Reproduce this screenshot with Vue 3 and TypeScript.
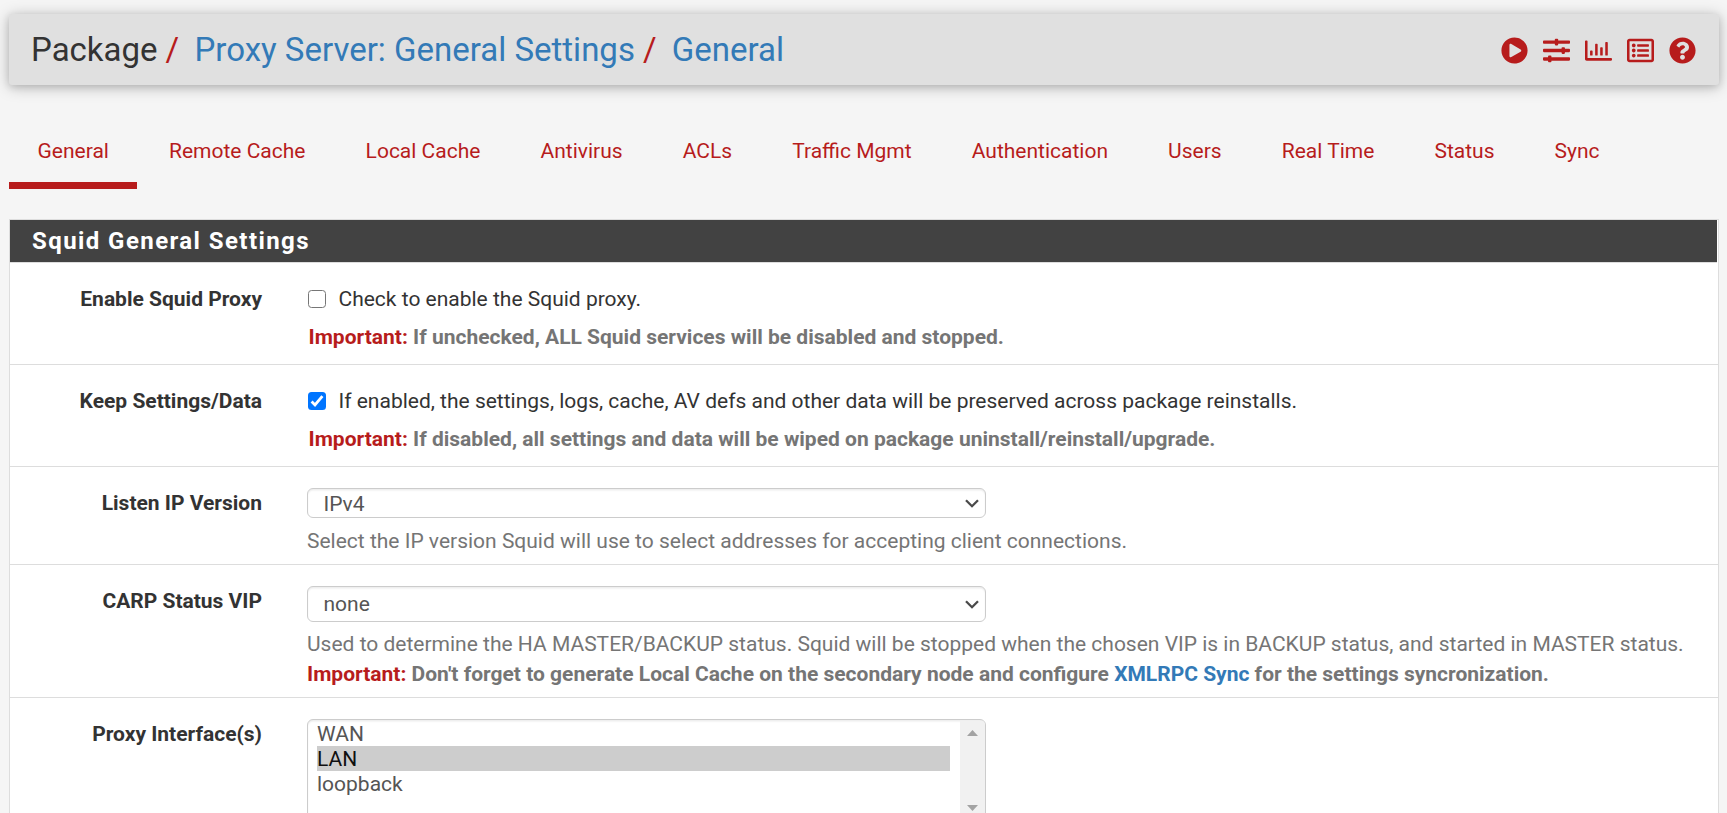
<script setup lang="ts">
interface Icon {
  name: string
  path: string
}

interface Crumb {
  text: string
  link: boolean
}

const crumbs: Crumb[] = [
  { text: 'Package', link: false },
  { text: 'Proxy Server: General Settings', link: true },
  { text: 'General', link: true },
]

const icons: Icon[] = [
  {
    name: 'Start service',
    path: 'M256 8C119 8 8 119 8 256s111 248 248 248 248-111 248-248S393 8 256 8zm115.7 272l-176 101c-15.8 8.8-35.7-2.5-35.7-21V152c0-18.4 19.8-29.8 35.7-21l176 107c16.4 9.2 16.4 32.9 0 42z',
  },
  {
    name: 'Related settings',
    path: 'M496 384H160v-16c0-8.8-7.2-16-16-16h-32c-8.8 0-16 7.2-16 16v16H16c-8.8 0-16 7.2-16 16v32c0 8.8 7.2 16 16 16h80v16c0 8.8 7.2 16 16 16h32c8.8 0 16-7.2 16-16v-16h336c8.8 0 16-7.2 16-16v-32c0-8.8-7.2-16-16-16zm0-160h-80v-16c0-8.8-7.2-16-16-16h-32c-8.8 0-16 7.2-16 16v16H16c-8.8 0-16 7.2-16 16v32c0 8.8 7.2 16 16 16h336v16c0 8.8 7.2 16 16 16h32c8.8 0 16-7.2 16-16v-16h80c8.8 0 16-7.2 16-16v-32c0-8.8-7.2-16-16-16zm0-160H288V48c0-8.8-7.2-16-16-16h-32c-8.8 0-16 7.2-16 16v16H16C7.2 64 0 71.2 0 80v32c0 8.8 7.2 16 16 16h208v16c0 8.8 7.2 16 16 16h32c8.8 0 16-7.2 16-16v-16h208c8.8 0 16-7.2 16-16V80c0-8.8-7.2-16-16-16z',
  },
  {
    name: 'Status',
    path: 'M396.8 352h22.4c6.4 0 12.8-6.4 12.8-12.8V108.8c0-6.4-6.4-12.8-12.8-12.8h-22.4c-6.4 0-12.8 6.4-12.8 12.8v230.4c0 6.4 6.4 12.8 12.8 12.8zm-192 0h22.4c6.4 0 12.8-6.4 12.8-12.8V140.8c0-6.4-6.4-12.8-12.8-12.8h-22.4c-6.4 0-12.8 6.4-12.8 12.8v198.4c0 6.4 6.4 12.8 12.8 12.8zm96 0h22.4c6.4 0 12.8-6.4 12.8-12.8V204.8c0-6.4-6.4-12.8-12.8-12.8h-22.4c-6.4 0-12.8 6.4-12.8 12.8v134.4c0 6.4 6.4 12.8 12.8 12.8zM496 400H48V80c0-8.84-7.16-16-16-16H16C7.16 64 0 71.16 0 80v336c0 17.67 14.33 32 32 32h464c8.84 0 16-7.16 16-16v-16c0-8.84-7.16-16-16-16zm-387.2-48h22.4c6.4 0 12.8-6.4 12.8-12.8v-70.4c0-6.4-6.4-12.8-12.8-12.8h-22.4c-6.4 0-12.8 6.4-12.8 12.8v70.4c0 6.4 6.4 12.8 12.8 12.8z',
  },
  {
    name: 'Log entries',
    path: 'M464 32H48C21.49 32 0 53.49 0 80v352c0 26.51 21.49 48 48 48h416c26.51 0 48-21.49 48-48V80c0-26.51-21.49-48-48-48zm-6 400H54a6 6 0 0 1-6-6V86a6 6 0 0 1 6-6h404a6 6 0 0 1 6 6v340a6 6 0 0 1-6 6zm-42-92v24c0 6.627-5.373 12-12 12H204c-6.627 0-12-5.373-12-12v-24c0-6.627 5.373-12 12-12h200c6.627 0 12 5.373 12 12zm0-96v24c0 6.627-5.373 12-12 12H204c-6.627 0-12-5.373-12-12v-24c0-6.627 5.373-12 12-12h200c6.627 0 12 5.373 12 12zm0-96v24c0 6.627-5.373 12-12 12H204c-6.627 0-12-5.373-12-12v-24c0-6.627 5.373-12 12-12h200c6.627 0 12 5.373 12 12zm-252 12c0 19.882-16.118 36-36 36s-36-16.118-36-36 16.118-36 36-36 36 16.118 36 36zm0 96c0 19.882-16.118 36-36 36s-36-16.118-36-36 16.118-36 36-36 36 16.118 36 36zm0 96c0 19.882-16.118 36-36 36s-36-16.118-36-36 16.118-36 36-36 36 16.118 36 36z',
  },
  {
    name: 'Help',
    path: 'M504 256c0 136.997-111.043 248-248 248S8 392.997 8 256C8 119.083 119.043 8 256 8s248 111.083 248 248zM262.655 90c-54.497 0-89.255 22.957-116.549 63.758-3.536 5.286-2.353 12.415 2.715 16.258l34.699 26.31c5.205 3.947 12.621 3.008 16.665-2.122 17.864-22.658 30.113-35.797 57.303-35.797 20.429 0 45.698 13.148 45.698 32.958 0 14.976-12.363 22.667-32.534 33.976C247.128 238.528 216 254.941 216 296v4c0 6.627 5.373 12 12 12h56c6.627 0 12-5.373 12-12v-1.333c0-28.462 83.186-29.647 83.186-106.667 0-58.002-60.165-102-116.531-102zM256 338c-25.365 0-46 20.635-46 46 0 25.364 20.635 46 46 46s46-20.636 46-46c0-25.365-20.635-46-46-46z',
  },
]

const tabs: string[] = [
  'General', 'Remote Cache', 'Local Cache', 'Antivirus', 'ACLs', 'Traffic Mgmt',
  'Authentication', 'Users', 'Real Time', 'Status', 'Sync',
]

const interfaces: string[] = ['WAN', 'LAN', 'loopback']
</script>

<template>
  <div class="page">
    <header class="header">
      <div class="crumbs">
        <template v-for="(c, i) in crumbs" :key="c.text">
          <span v-if="i > 0" class="slash">/</span>
          <span :class="{ link: c.link }">{{ c.text }}</span>
        </template>
      </div>
      <div class="icons">
        <svg v-for="icon in icons" :key="icon.name" viewBox="0 0 512 512" :aria-label="icon.name">
          <path :d="icon.path" />
        </svg>
      </div>
    </header>

    <nav class="tabs">
      <a v-for="(t, i) in tabs" :key="t" class="tab" :class="{ active: i === 0 }">{{ t }}</a>
    </nav>

    <section class="panel">
      <h2 class="heading">Squid General Settings</h2>

      <div class="row">
        <label class="label">Enable Squid Proxy</label>
        <div class="field">
          <div class="check"><span class="box"></span>Check to enable the Squid proxy.</div>
          <p class="help strong inset"><span class="red">Important:</span> If unchecked, ALL Squid services will be disabled and stopped.</p>
        </div>
      </div>

      <div class="row">
        <label class="label">Keep Settings/Data</label>
        <div class="field">
          <div class="check">
            <span class="box checked">
              <svg viewBox="0 0 18 18"><path d="M3.6 9.6 7 13 14.4 4.2" /></svg>
            </span>If enabled, the settings, logs, cache, AV defs and other data will be preserved across package reinstalls.
          </div>
          <p class="help strong inset"><span class="red">Important:</span> If disabled, all settings and data will be wiped on package uninstall/reinstall/upgrade.</p>
        </div>
      </div>

      <div class="row short">
        <label class="label">Listen IP Version</label>
        <div class="field">
          <div class="select compact">
            <span>IPv4</span>
            <svg viewBox="0 0 14 9"><path d="M1 1.2 7 7.2 13 1.2" /></svg>
          </div>
          <p class="help">Select the IP version Squid will use to select addresses for accepting client connections.</p>
        </div>
      </div>

      <div class="row tall">
        <label class="label">CARP Status VIP</label>
        <div class="field">
          <div class="select">
            <span>none</span>
            <svg viewBox="0 0 14 9"><path d="M1 1.2 7 7.2 13 1.2" /></svg>
          </div>
          <p class="help tight">Used to determine the HA MASTER/BACKUP status. Squid will be stopped when the chosen VIP is in BACKUP status, and started in MASTER status.</p>
          <p class="help strong next"><span class="red">Important:</span> Don't forget to generate Local Cache on the secondary node and configure <a class="link">XMLRPC Sync</a> for the settings syncronization.</p>
        </div>
      </div>

      <div class="row last">
        <label class="label">Proxy Interface(s)</label>
        <div class="field">
          <div class="listbox">
            <ul class="options">
              <li v-for="name in interfaces" :key="name" :class="{ selected: name === 'LAN' }"><span>{{ name }}</span></li>
            </ul>
            <div class="scrollbar">
              <svg viewBox="0 0 11 6"><path d="M0 6 5.5 0 11 6z" /></svg>
              <svg viewBox="0 0 11 6"><path d="M0 0 5.5 6 11 0z" /></svg>
            </div>
          </div>
        </div>
      </div>
    </section>
  </div>
</template>

<style>
body {
  background: #f5f5f5;
}
</style>

<style scoped>
.page {
  box-sizing: border-box;
  height: 813px;
  padding: 14px 8px 0 9px;
  overflow: hidden;
  background: #f5f5f5;
  color: #333;
  font-family: Roboto, "Liberation Sans", sans-serif;
  font-size: 21px;
  line-height: 30px;
  white-space: nowrap;
}

.header {
  display: flex;
  align-items: center;
  justify-content: space-between;
  box-sizing: border-box;
  height: 71px;
  padding: 0 23px 0 22px;
  border-radius: 3px;
  background: #e0e0e0;
  box-shadow: 0 2px 15px rgba(0, 0, 0, 0.26), 0 2px 7px rgba(0, 0, 0, 0.1);
}

.crumbs {
  display: flex;
  padding-top: 1px;
  font-size: 33px;
  line-height: 70px;
}

.link {
  color: #337ab7;
}

.slash {
  margin: 0 15.3px 0 8px;
  color: #b71c1c;
}

.red {
  color: #b71c1c;
}

.icons {
  display: flex;
  gap: 15px;
}

.icons svg {
  width: 27px;
  height: 27px;
  margin-top: 2px;
  fill: #b71c1c;
}

.tabs {
  display: flex;
  gap: 3.1px;
  height: 104px;
  margin-top: 30px;
}

.tab {
  box-sizing: border-box;
  height: 74px;
  padding: 21px 28.5px 0;
  color: #b71c1c;
}

.tab.active {
  border-bottom: 7px solid #b71c1c;
}

.panel {
  box-sizing: border-box;
  height: 620px;
  border: 1px solid #ddd;
  background: #fff;
}

.heading {
  height: 42px;
  margin: 0 1px 0 0;
  padding-left: 22px;
  border-bottom: 1px solid #ddd;
  background: #424242;
  background-clip: padding-box;
  color: #fff;
  font-size: 24px;
  font-weight: 700;
  letter-spacing: 1.42px;
  line-height: 42px;
}

.row {
  display: grid;
  grid-template-columns: 252px 1fr;
  column-gap: 45px;
  box-sizing: border-box;
  height: 102px;
  padding-top: 21px;
  border-bottom: 1px solid #ddd;
}

.row.short {
  height: 98px;
}

.row.tall {
  height: 133px;
}

.row.last {
  height: 260px;
}

.label {
  text-align: right;
  font-weight: 700;
}

.check {
  display: flex;
  align-items: center;
}

.box {
  box-sizing: border-box;
  width: 18px;
  height: 18px;
  margin: 0 12.5px 0 1px;
  border: 1.5px solid #767676;
  border-radius: 3.5px;
}

.box.checked {
  border: 0;
  background: #0075ff;
}

.box svg {
  display: block;
  fill: none;
  stroke: #fff;
  stroke-width: 2.8;
}

.help {
  margin: 8px 0 0;
  color: #757575;
}

.help.tight {
  margin-top: 7px;
}

.help.next {
  margin-top: 0;
}

.strong {
  font-weight: 700;
}

.inset {
  padding-left: 1.5px;
}

.select {
  display: flex;
  align-items: center;
  justify-content: space-between;
  box-sizing: border-box;
  width: 679px;
  height: 36px;
  padding: 0 6px 0 15.5px;
  border: 1px solid #ccc;
  border-radius: 6px;
  box-shadow: inset 0 1.5px 1.5px rgba(0, 0, 0, 0.075);
  color: #555;
}

.select.compact {
  height: 30px;
  padding-top: 1px;
}

.select svg {
  width: 14px;
  height: 9px;
  fill: none;
  stroke: #4a4a4a;
  stroke-width: 2.3;
}

.listbox {
  display: flex;
  box-sizing: border-box;
  width: 679px;
  height: 130px;
  border: 1px solid #ccc;
  border-radius: 6px;
  box-shadow: inset 0 1.5px 1.5px rgba(0, 0, 0, 0.075);
  overflow: hidden;
}

.options {
  flex: 1;
  margin: 0;
  padding: 1px 10px 0 9px;
  color: #555;
  line-height: 27px;
  list-style: none;
}

.options li {
  height: 25px;
}

.options .selected {
  background: #cdcdcd;
  color: #101010;
}

.scrollbar {
  display: flex;
  flex-direction: column;
  justify-content: space-between;
  align-items: center;
  box-sizing: border-box;
  width: 25px;
  height: 101px;
  margin-top: 1px;
  padding: 9px 0 11px;
  background: #f1f1f1;
}

.scrollbar svg {
  width: 11px;
  height: 6px;
  fill: #a3a3a3;
}
</style>
